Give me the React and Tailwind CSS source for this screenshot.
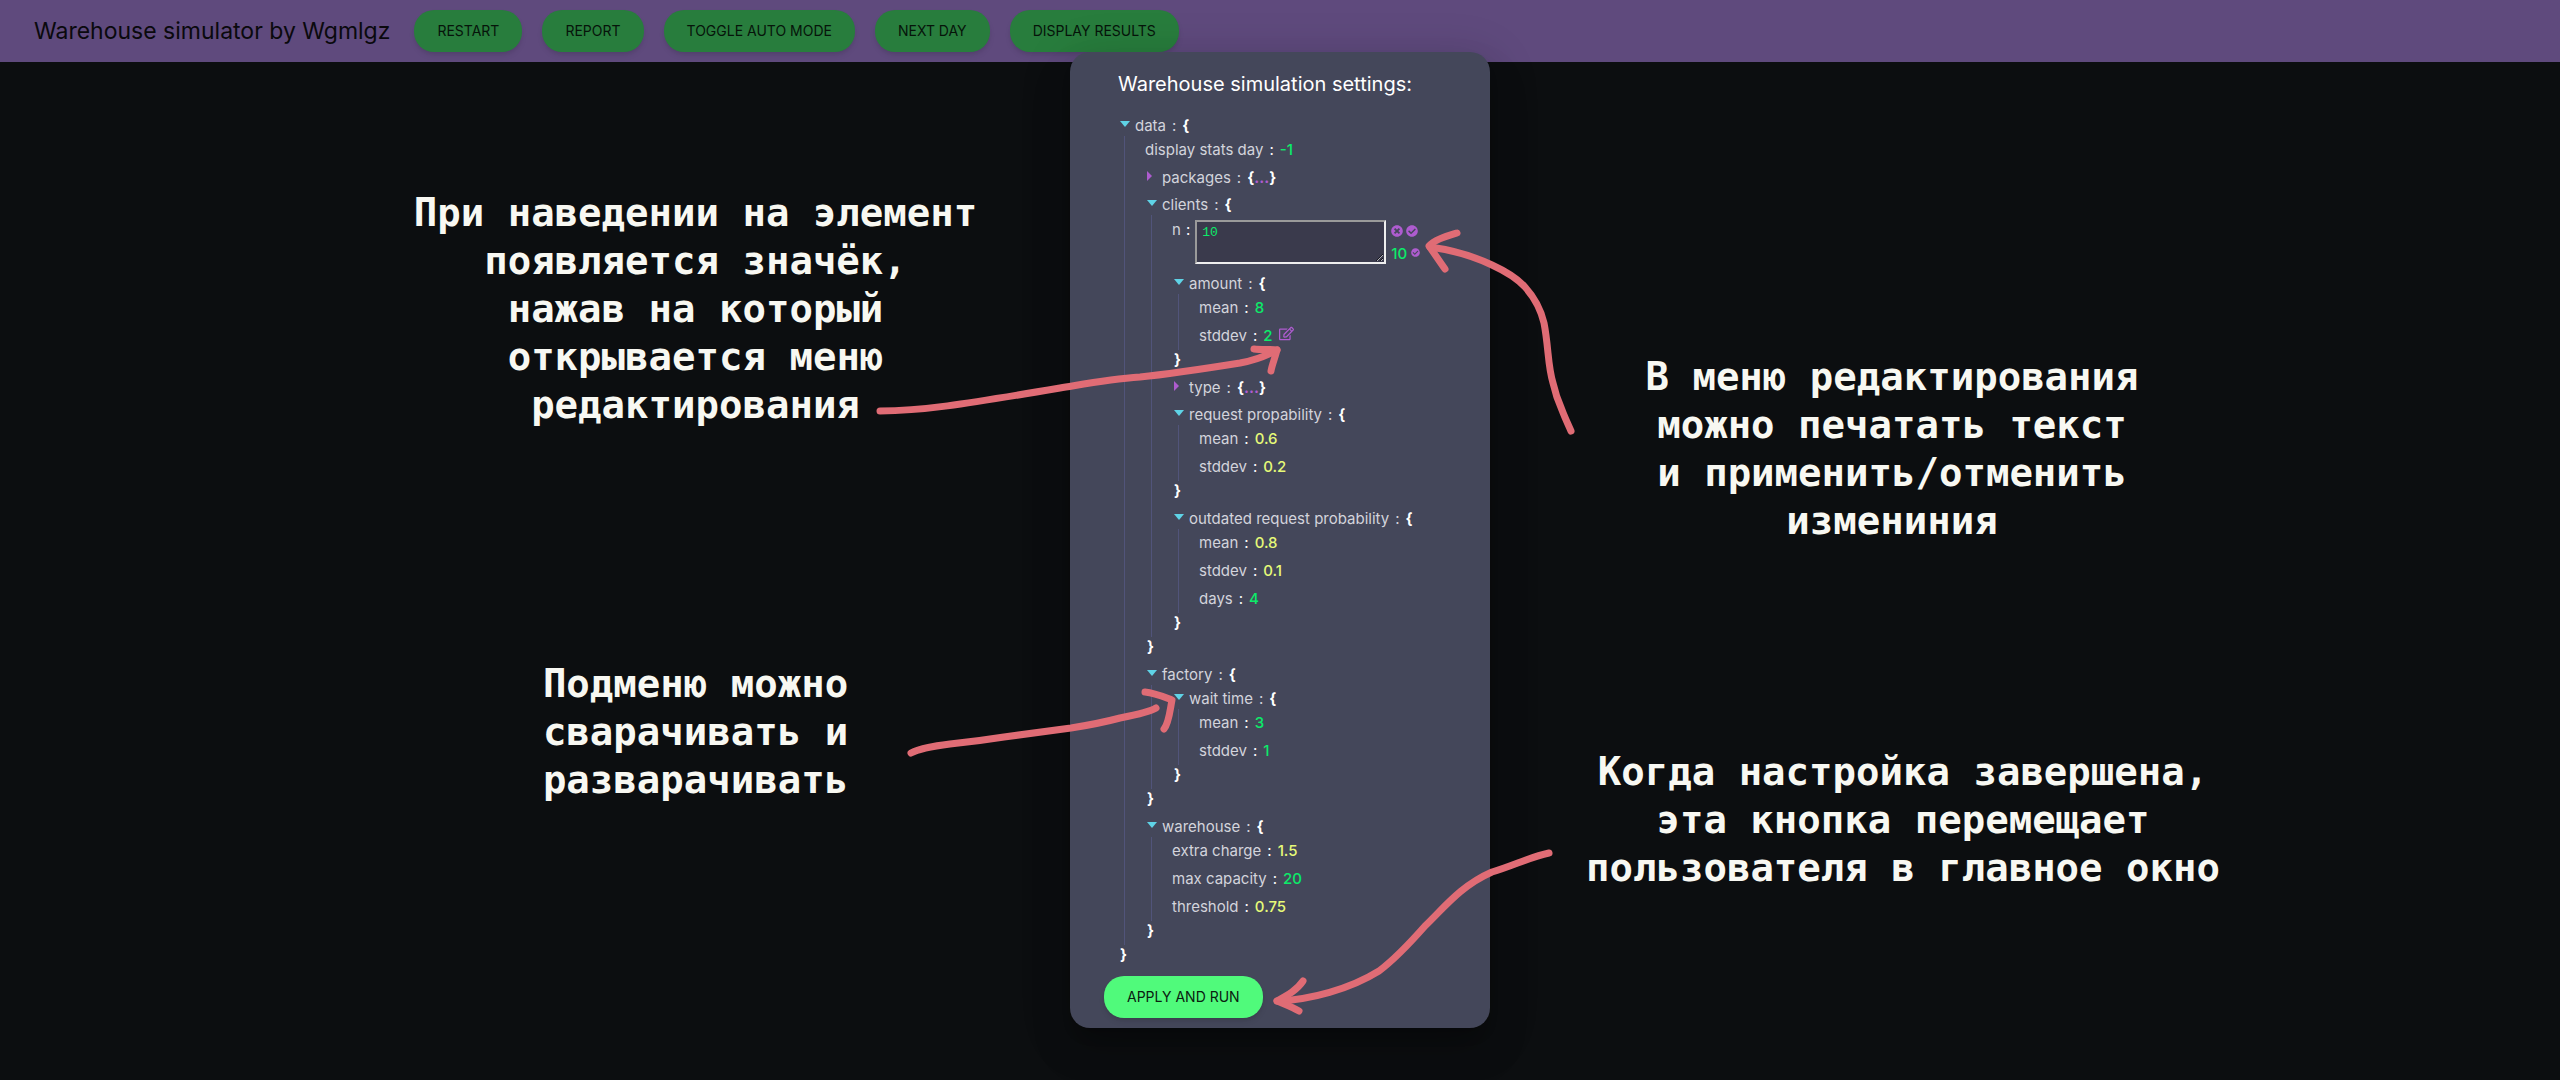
import { FaTimesCircle, FaCheckCircle, FaRegEdit } from "react-icons/fa";

const BUTTONS = ["Restart", "Report", "Toggle auto mode", "Next day", "Display results"];

const SETTINGS = [
  { key: "display stats day", value: "-1" },
  { key: "packages", collapsed: true },
  {
    key: "clients",
    children: [
      { key: "n", value: "10", editing: true },
      {
        key: "amount",
        children: [
          { key: "mean", value: "8" },
          { key: "stddev", value: "2", hovered: true },
        ],
      },
      { key: "type", collapsed: true },
      {
        key: "request propability",
        children: [
          { key: "mean", value: "0.6" },
          { key: "stddev", value: "0.2" },
        ],
      },
      {
        key: "outdated request probability",
        children: [
          { key: "mean", value: "0.8" },
          { key: "stddev", value: "0.1" },
          { key: "days", value: "4" },
        ],
      },
    ],
  },
  {
    key: "factory",
    children: [
      {
        key: "wait time",
        children: [
          { key: "mean", value: "3" },
          { key: "stddev", value: "1" },
        ],
      },
    ],
  },
  {
    key: "warehouse",
    children: [
      { key: "extra charge", value: "1.5" },
      { key: "max capacity", value: "20" },
      { key: "threshold", value: "0.75" },
    ],
  },
];

function Value({ value }) {
  const color = value.includes(".") ? "font-medium text-[#e6fa78]" : "font-medium text-[#0ceb69]";
  return <span className={color}>{value}</span>;
}

function Leaf({ node }) {
  return (
    <div className="flex h-7 items-center gap-[6px]">
      <span>{node.key}</span>
      <span className="text-white">:</span>
      <Value value={node.value} />
      {node.hovered && (
        <button aria-label={"Edit " + node.key} className="mb-[6px] text-[#ae5ccf]">
          <FaRegEdit size={15} />
        </button>
      )}
    </div>
  );
}

function EditingLeaf({ node }) {
  return (
    <div className="flex h-[55px] items-start gap-[5px] pt-[5px]">
      <label htmlFor="edit-n" className="leading-5">{node.key}</label>
      <span className="leading-5 text-white">:</span>
      <textarea
        id="edit-n"
        defaultValue={node.value}
        className="h-11 w-[191px] resize border-2 border-t-[#9a9a9a] border-r-[#eeeeee] border-b-[#eeeeee] border-l-[#9a9a9a] bg-[#3a3a4c] px-[5px] py-[3px] font-['Liberation_Mono',monospace] text-[13px] leading-4 text-[#0ceb69]"
      />
      <div className="flex flex-col gap-[7px] pt-[5px] text-[#ae5ccf]">
        <div className="flex gap-[3px]">
          <button aria-label="Cancel"><FaTimesCircle size={12} /></button>
          <button aria-label="Apply"><FaCheckCircle size={12} /></button>
        </div>
        <div className="flex items-center gap-1 leading-5">
          <Value value={node.value} />
          <button aria-label="Apply as number" className="mb-1"><FaCheckCircle size={9} /></button>
        </div>
      </div>
    </div>
  );
}

function Triangle({ collapsed }) {
  return (
    <svg viewBox="0 0 10 10" className="mb-1 size-[10px]" aria-hidden="true">
      {collapsed ? <path d="M0 0L5 5L0 10Z" fill="#ae5ccf" /> : <path d="M0 2H10L5 8Z" fill="#5fd3e6" />}
    </svg>
  );
}

function Branch({ node }) {
  return (
    <div>
      <button className={node.collapsed ? "flex h-[27px] items-center gap-[5px]" : "flex h-6 items-center gap-[5px] pt-1"}>
        <Triangle collapsed={node.collapsed} />
        <span className="flex gap-[6px]">
          <span>{node.key}</span>
          <span>:</span>
          <b className="text-white">
            {"{"}
            {node.collapsed && <span className="text-[#ae5ccf]">...</span>}
            {node.collapsed && "}"}
          </b>
        </span>
      </button>
      {node.children && (
        <>
          <div className="ml-1 border-l border-[#51547a] pl-5">
            {node.children.map((child) =>
              child.value === undefined ? (
                <div key={child.key} className="pl-[2px]"><Branch node={child} /></div>
              ) : child.editing ? (
                <EditingLeaf key={child.key} node={child} />
              ) : (
                <Leaf key={child.key} node={child} />
              )
            )}
          </div>
          <div className="h-6 pb-1 leading-5 font-bold text-white">{"}"}</div>
        </>
      )}
    </div>
  );
}

function Note({ lines, className }) {
  return (
    <p className={className}>
      {lines.map((line) => (
        <span key={line} className="block whitespace-nowrap">{line}</span>
      ))}
    </p>
  );
}

function Arrows() {
  return (
    <svg
      viewBox="0 0 2560 1080"
      aria-hidden="true"
      className="pointer-events-none absolute top-0 left-1/2 h-[1080px] w-[2560px] -translate-x-1/2"
      fill="none"
      stroke="#e06c75"
      strokeWidth="7"
      strokeLinecap="round"
      strokeLinejoin="round"
    >
      <path d="M880 411C920 411 960 405 1060 388C1090 383 1110 379 1140 377C1170 374 1215 367 1240 363C1256 360 1268 355 1277 350" />
      <path d="M1254 349C1262 350 1270 349 1277 350C1275 358 1272 365 1271 371" />
      <path d="M911 753C920 748 935 746 950 744C970 742 985 740 1004 737L1071 728C1090 725 1105 722 1120 718C1135 715 1150 712 1156 708" />
      <path d="M1145 692C1155 693 1164 697 1172 700C1170 710 1169 723 1164 729" />
      <path d="M1571 431C1568 424 1565 418 1562 410C1558 401 1555 392 1553 383C1550 373 1549 363 1548 353C1547 343 1546 333 1544 323C1541 310 1535 298 1525 287C1516 277 1505 271 1492 265C1473 256 1452 250 1430 247" />
      <path d="M1457 233C1444 237 1434 240 1429 246C1434 253 1440 262 1445 269" />
      <path d="M1549 853C1530 857 1515 865 1492 872C1460 886 1443 909 1425 926C1410 943 1395 959 1379 971C1350 989 1310 1000 1277 1001" />
      <path d="M1303 981C1297 990 1288 995 1277 1001C1284 1004 1292 1007 1299 1011" />
    </svg>
  );
}

export default function App() {
  return (
    <div className="relative min-h-screen overflow-hidden bg-[#0c0e10] font-[Inter,sans-serif]">
      <header className="flex h-[62px] items-center gap-5 bg-[#5f4a7d] pl-[34px] text-[#0a090d]">
        <h1 className="pr-1 text-[23px]">Warehouse simulator by Wgmlgz</h1>
        {BUTTONS.map((label) => (
          <button
            key={label}
            className="h-[42px] rounded-[20px] bg-[#287d3d] px-[23px] text-sm whitespace-nowrap text-[#06140a] uppercase shadow-md"
          >
            {label}
          </button>
        ))}
      </header>

      <div className="absolute inset-x-0 top-0 flex min-h-full items-center justify-center">
        <div className="flex w-[820px] flex-col items-center gap-[231px] self-start pt-[189px] pl-[71px] text-center font-['DejaVu_Sans_Mono',monospace] text-[39px] leading-[48px] font-bold text-[#f8f8f2]">
          <Note lines={["При наведении на элемент", "появляется значёк,", "нажав на который", "открывается меню", "редактирования"]} />
          <Note lines={["Подменю можно", "сварачивать и", "разварачивать"]} />
        </div>

        <main
          role="dialog"
          aria-labelledby="settings-title"
          className="w-[420px] shrink-0 rounded-[20px] bg-[#44475a] px-[34px] pt-[17px] pb-[10px] shadow-[0_11px_15px_-7px_rgba(0,0,0,0.2),0_24px_38px_3px_rgba(0,0,0,0.14),0_9px_46px_8px_rgba(0,0,0,0.12)]"
        >
          <h2 id="settings-title" className="pl-[14px] text-xl leading-[30px] text-white">
            Warehouse simulation settings:
          </h2>
          <div className="mt-[13px] pl-4 text-[15px] leading-5 whitespace-nowrap text-[#d3d4dc]">
            <Branch node={{ key: "data", children: SETTINGS }} />
          </div>
          <button className="mt-[7px] h-[42px] rounded-[20px] bg-[#50fa7b] px-[23px] text-sm text-[#0a2010] uppercase shadow-md">
            Apply and run
          </button>
        </main>

        <div className="flex w-[820px] flex-col items-center gap-[203px] self-start pt-[353px] text-center font-['DejaVu_Sans_Mono',monospace] text-[39px] leading-[48px] font-bold text-[#f8f8f2]">
          <Note className="pr-4" lines={["В меню редактирования", "можно печатать текст", "и применить/отменить", "измениния"]} />
          <Note className="pl-[6px]" lines={["Когда настройка завершена,", "эта кнопка перемещает", "пользователя в главное окно"]} />
        </div>
      </div>
      <Arrows />
    </div>
  );
}
